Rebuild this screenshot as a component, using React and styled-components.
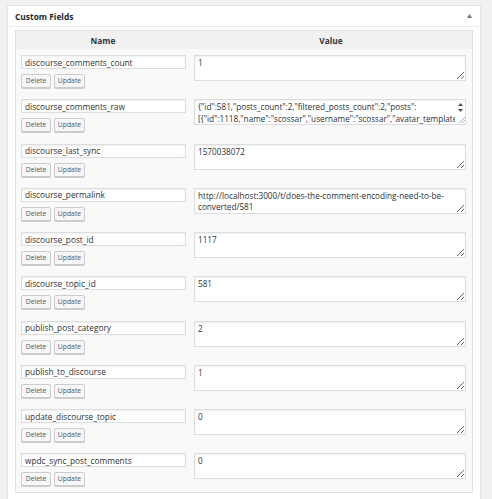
import React from "react";
import styled, { createGlobalStyle } from "styled-components";

const GlobalStyle = createGlobalStyle`
  html, body {
    margin: 0;
    background: #f1f1f1;
    overflow: hidden;
  }
  body {
    font-family: "Open Sans", "Noto Sans", sans-serif;
    color: #23282d;
  }
`;

const fields = [
  { key: "discourse_comments_count", value: "1" },
  {
    key: "discourse_comments_raw",
    value:
      '{"id":581,"posts_count":2,"filtered_posts_count":2,"posts":\n[{"id":1118,"name":"scossar","username":"scossar","avatar_template":"/user_avatar/localhost/scossar/{size}/2_2.png","created_at":"2019-10-02T17:47:51.000Z"}]}',
    scroll: true,
  },
  { key: "discourse_last_sync", value: "1570038072" },
  {
    key: "discourse_permalink",
    value: "http://localhost:3000/t/does-the-comment-encoding-need-to-be-\nconverted/581",
  },
  { key: "discourse_post_id", value: "1117" },
  { key: "discourse_topic_id", value: "581" },
  { key: "publish_post_category", value: "2" },
  { key: "publish_to_discourse", value: "1" },
  { key: "update_discourse_topic", value: "0" },
  { key: "wpdc_sync_post_comments", value: "0" },
];

const Page = styled.div`
  padding: 5px 11px 0 7px;
`;

const Postbox = styled.div`
  background: #fff;
  border: 1px solid #e5e5e5;
  box-shadow: 0 1px 1px rgba(0, 0, 0, 0.04);
`;

const PostboxHeader = styled.div`
  display: flex;
  align-items: center;
  justify-content: space-between;
  height: 20px;
  padding: 0 8px 0 7px;
  border-bottom: 1px solid #eee;
`;

const PostboxTitle = styled.h2`
  margin: 0;
  font-size: 8.4px;
  font-weight: 700;
  color: #23282d;
`;

const Inside = styled.div`
  padding: 3px 7px 8px;
`;

const Table = styled.div`
  border: 1px solid #e1e1e1;
  background: #f9f9f9;
`;

const Columns = styled.div`
  display: grid;
  grid-template-columns: 174px 1fr;
`;

const HeadRow = styled(Columns)`
  height: 18px;
  align-items: center;
  background: #f1f1f1;
`;

const HeadCell = styled.div`
  text-align: center;
  font-size: 8.3px;
  font-weight: 700;
  color: #32373c;
`;

const Row = styled(Columns)`
  box-sizing: border-box;
  height: 44.25px;
  padding-top: 6px;
`;

const NameCell = styled.div`
  display: flex;
  flex-direction: column;
  gap: 5px;
  padding: 0 4px 0 5px;
`;

const ValueCell = styled.div`
  position: relative;
  padding: 0 6px 0 4px;
`;

const fieldBase = `
  box-sizing: border-box;
  width: 100%;
  margin: 0;
  border: 1px solid #ddd;
  border-radius: 0;
  background: #fff;
  box-shadow: inset 0 1px 2px rgba(0, 0, 0, 0.07);
  color: #2c3136;
  font-family: "Open Sans", "Noto Sans", sans-serif;
  outline: none;
`;

const NameInput = styled.input`
  ${fieldBase}
  height: 14px;
  padding: 0 3px;
  font-size: 8.3px;
`;

const ValueArea = styled.textarea`
  ${fieldBase}
  display: block;
  height: 26px;
  padding: 1px 3px;
  font-size: 8.2px;
  line-height: 11.5px;
  resize: vertical;
  overflow: hidden;
  white-space: ${({ $pre }) => ($pre ? "pre" : "pre-wrap")};
`;

const Buttons = styled.div`
  display: flex;
  gap: 3px;
`;

const SmallButton = styled.button`
  box-sizing: border-box;
  height: 14px;
  width: ${({ $w }) => $w}px;
  padding: 0;
  border: 1px solid #ccc;
  border-radius: 2px;
  background: #f7f7f7;
  box-shadow: 0 1px 0 #ccc;
  color: #555;
  font-family: "Open Sans", "Noto Sans", sans-serif;
  font-size: 6.8px;
  line-height: 12px;
  cursor: pointer;
`;

const ScrollBar = styled.div`
  position: absolute;
  top: 1px;
  right: 7px;
  width: 10px;
  height: 24px;
  padding: 3px 0 1px;
  box-sizing: border-box;
  background: #fff;
  display: flex;
  flex-direction: column;
  align-items: center;
  gap: 3px;
  pointer-events: none;
`;

const Grip = styled.svg`
  margin-top: auto;
  align-self: flex-end;
`;

const Arrow = ({ down }) => (
  <svg width="5" height="3" viewBox="0 0 5 3">
    <path d={down ? "M0 0H5L2.5 3Z" : "M0 3H5L2.5 0Z"} fill="#505050" />
  </svg>
);

const ToggleArrow = () => (
  <svg width="5" height="4" viewBox="0 0 5 4">
    <path d="M0 4H5L2.5 0Z" fill="#72777c" />
  </svg>
);

const FieldRow = ({ field }) => (
  <Row>
    <NameCell>
      <NameInput readOnly value={field.key} />
      <Buttons>
        <SmallButton $w={30}>Delete</SmallButton>
        <SmallButton $w={31}>Update</SmallButton>
      </Buttons>
    </NameCell>
    <ValueCell>
      <ValueArea readOnly value={field.value} $pre={field.scroll} />
      {field.scroll && (
        <ScrollBar>
          <Arrow />
          <Arrow down />
          <Grip width="6" height="6" viewBox="0 0 6 6">
            <path d="M6 0L0 6M6 3L3 6" stroke="#9a9a9a" strokeWidth="0.8" />
          </Grip>
        </ScrollBar>
      )}
    </ValueCell>
  </Row>
);

export default function App() {
  return (
    <>
      <GlobalStyle />
      <Page>
        <Postbox>
          <PostboxHeader>
            <PostboxTitle>Custom Fields</PostboxTitle>
            <ToggleArrow />
          </PostboxHeader>
          <Inside>
            <Table>
              <HeadRow>
                <HeadCell>Name</HeadCell>
                <HeadCell>Value</HeadCell>
              </HeadRow>
              {fields.map((f) => (
                <FieldRow key={f.key} field={f} />
              ))}
            </Table>
          </Inside>
        </Postbox>
      </Page>
    </>
  );
}
